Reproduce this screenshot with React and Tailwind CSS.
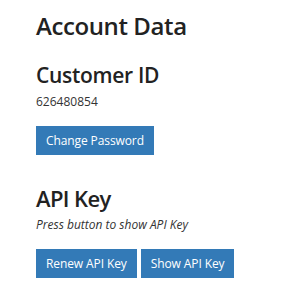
import React from 'react';

// Account settings panel: customer id and API key actions
const Button = ({ children, className = '' }) => (
  <button
    className={`h-[29px] bg-[#337ab7] px-[10px] text-[12px] leading-none tracking-[-0.1px] text-white ${className}`}
  >
    {children}
  </button>
);

export default function App() {
  return (
    <div
      className="flex min-h-[300px] w-[285px] flex-col bg-white pl-[36px] pt-[12px] text-[#222]"
      style={{ fontFamily: '"Open Sans", "Noto Sans", sans-serif' }}
    >
      <h1 className="text-[24px] font-semibold leading-[28px] tracking-[-0.4px]">Account Data</h1>

      <h2 className="mt-[23px] text-[21px] font-semibold leading-[24px] tracking-[-0.3px]">Customer ID</h2>
      <div className="mt-[7px] text-[12px] leading-[16px] text-[#333]">626480854</div>

      <div className="mt-[16px] flex">
        <Button className="h-[28px]">Change Password</Button>
      </div>

      <h2 className="mt-[30px] text-[22px] font-semibold leading-[27px] tracking-[-0.6px]">API Key</h2>
      <p className="mt-[5px] text-[12px] italic leading-[16px] text-[#333]">
        Press button to show API Key
      </p>

      <div className="mt-[16px] flex gap-[4px]">
        <Button>Renew API Key</Button>
        <Button>Show API Key</Button>
      </div>
    </div>
  );
}
